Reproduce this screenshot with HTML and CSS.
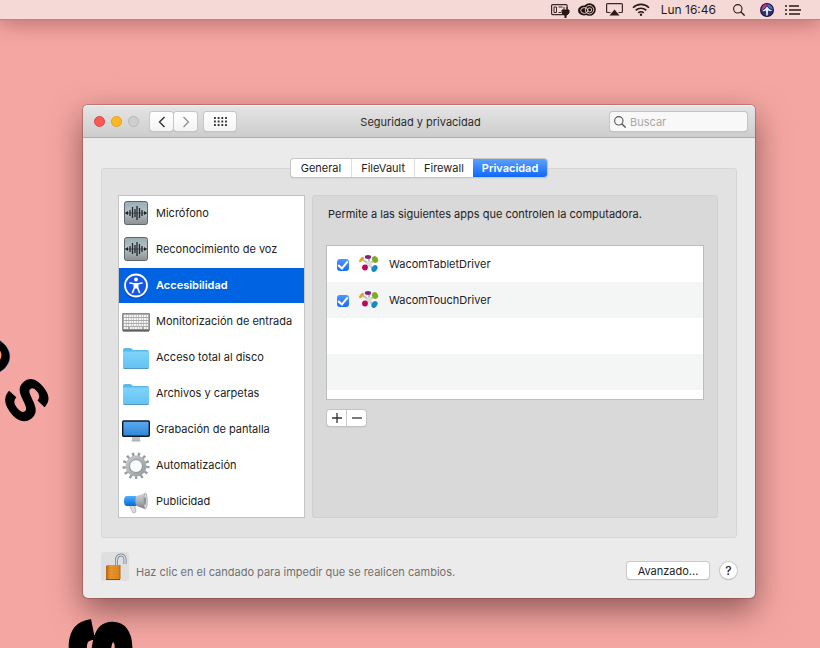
FILE: index.html
```
<!DOCTYPE html>
<html lang="es">
<head>
<meta charset="utf-8">
<title>Seguridad y privacidad</title>
<link rel="stylesheet" href="styles.css">
</head>
<body>
<svg class="defs" aria-hidden="true">
  <defs>
    <linearGradient id="steel" x1="0" y1="0" x2="0" y2="1"><stop offset="0" stop-color="#9aabb2"/><stop offset=".45" stop-color="#b4c2c8"/><stop offset="1" stop-color="#8e8f90"/></linearGradient>
    <linearGradient id="sky" x1="0" y1="0" x2="0" y2="1"><stop offset="0" stop-color="#7fd3fb"/><stop offset="1" stop-color="#64c2f2"/></linearGradient>
    <linearGradient id="screen" x1="0" y1="0" x2="0" y2="1"><stop offset="0" stop-color="#5aaaf0"/><stop offset="1" stop-color="#2f86d6"/></linearGradient>
    <linearGradient id="metal" x1="0" y1="0" x2="1" y2="1"><stop offset="0" stop-color="#c3c7ca"/><stop offset="1" stop-color="#9a9fa3"/></linearGradient>
    <linearGradient id="horn" x1="0" y1="0" x2="0" y2="1"><stop offset="0" stop-color="#d5d7d9"/><stop offset=".5" stop-color="#b0b4b7"/><stop offset="1" stop-color="#777c80"/></linearGradient>
    <linearGradient id="blue" x1="0" y1="0" x2="0" y2="1"><stop offset="0" stop-color="#4db2ff"/><stop offset="1" stop-color="#0668d8"/></linearGradient>
    <linearGradient id="brass" x1="0" y1="0" x2="1" y2="0"><stop offset="0" stop-color="#b5600f"/><stop offset=".3" stop-color="#e99a2f"/><stop offset=".85" stop-color="#e08a20"/><stop offset="1" stop-color="#b4620f"/></linearGradient>
  </defs>
  <symbol id="i-mic" viewBox="0 0 28 28">
    <rect x="2.500" y="2.500" width="23" height="23" rx="2" fill="url(#steel)" stroke="#5d666b"/>
    <path d="M3 14h22" stroke="#333" stroke-width=".7"/>
    <path d="M3 14l3-2v4zM25 14l-3-2v4z" fill="#222"/>
    <path d="M8 11v6M10.500 8v11M13 10v8M15 7v14M17.500 9v10M20 11v6" stroke="#22282b" stroke-width="1.300"/>
  </symbol>
  <symbol id="i-access" viewBox="0 0 28 28">
    <circle cx="14" cy="15.500" r="12" fill="#0643c0"/>
    <circle cx="14" cy="14.500" r="11" fill="#1456e8" stroke="#fff" stroke-width="1.800"/>
    <circle cx="14" cy="8.500" r="1.900" fill="#fff"/>
    <path d="M8 12l4.500 1v3.500l-2 5M20 12l-4.500 1v3.500l2 5" fill="none" stroke="#fff" stroke-width="1.600" stroke-linecap="round"/>
    <path d="M11.800 12h4.400v5.500h-4.400z" fill="#fff"/>
  </symbol>
  <symbol id="i-keys" viewBox="0 0 28 28">
    <rect x="0" y="6" width="28" height="18" rx="1" fill="#8b8b8b"/>
    <rect x="1" y="7" width="26" height="15" fill="#aaa"/>
    <path d="M2 9h24M2 12h24M2 15h24M2 18h24M2 21h4M8 21h12M22 21h4" stroke="#f7f7f7" stroke-width="1.800" stroke-dasharray="1.900 .6"/>
    <path d="M1 24h26" stroke="#333" stroke-width="1"/>
  </symbol>
  <symbol id="i-folder" viewBox="0 0 28 28">
    <path d="M1 7q0-2 2-2h5q1 0 2 1l1 1h14q2 0 2 2v14H1z" fill="#5bb9e8"/>
    <path d="M1 8.500h26V24q0 1.500-1.500 1.500h-23Q1 25.500 1 24z" fill="url(#sky)"/>
    <path d="M1.500 25.500h25" stroke="#5299bd"/>
  </symbol>
  <symbol id="i-screen" viewBox="0 0 28 28">
    <path d="M10 21h8v5h-8z" fill="#bfbfc2"/>
    <path d="M9.500 26h9" stroke="#aaa"/>
    <rect x=".7" y="6" width="26.600" height="15.300" rx="1" fill="url(#screen)" stroke="#111a24" stroke-width="1.400"/>
  </symbol>
  <symbol id="i-gear" viewBox="0 0 28 28">
    <circle cx="14" cy="15" r="11.700" fill="none" stroke="#989da1" stroke-width="3.800" stroke-dasharray="2.300 3.351"/>
    <circle cx="14" cy="15" r="8.500" fill="none" stroke="url(#metal)" stroke-width="4"/>
    <circle cx="14" cy="15" r="6.400" fill="none" stroke="#777c80" stroke-width=".8"/>
  </symbol>
  <symbol id="i-horn" viewBox="0 0 28 28">
    <path d="M7 18l4 8 3-1-1-6z" fill="#dadcde" stroke="#999ea2" stroke-width=".6"/>
    <path d="M12 10L23 6q3 8 0 16l-11-4z" fill="url(#horn)"/>
    <ellipse cx="23.500" cy="14" rx="1.800" ry="8" fill="#d5d8da" stroke="#92979b" stroke-width=".6"/>
    <ellipse cx="23" cy="14" rx="1" ry="4" fill="#8b9094"/>
    <path d="M14 9H5q-3 0-3 5t3 5h9q-1.500-5 0-10z" fill="url(#blue)"/>
  </symbol>
  <symbol id="i-wacom" viewBox="0 0 20 20">
    <path d="M10 10L3 5M10 10V3M10 10l6-4M10 10l-4 4M10 10l5 6" stroke="#bcbcbc" stroke-width="2"/>
    <circle cx="10" cy="10" r="3" fill="#ddd"/>
    <ellipse cx="2.500" cy="5.500" rx="1.500" ry="3.200" transform="rotate(40 2.500 5.500)" fill="#e6a416"/>
    <ellipse cx="9" cy="3" rx="3.200" ry="1.900" fill="#7d247e"/>
    <ellipse cx="16" cy="5.500" rx="2.900" ry="3.600" transform="rotate(-30 16 5.500)" fill="#7faa22"/>
    <circle cx="6" cy="13.500" r="2.900" fill="#be0756"/>
    <ellipse cx="15.500" cy="14.500" rx="2.700" ry="3.600" transform="rotate(35 15.500 14.500)" fill="#1688c4"/>
  </symbol>
  <symbol id="i-find" viewBox="0 0 12 12">
    <circle cx="4.800" cy="4.800" r="4.200" fill="none" stroke="currentColor" stroke-width="1.100"/>
    <path d="M7.800 7.800L11.600 11.600" stroke="currentColor" stroke-width="1.300"/>
  </symbol>
</svg>

<div class="wallpaper" aria-hidden="true">
  <span class="letter letter-o">O</span>
  <span class="letter letter-s">S</span>
  <span class="letter letter-big">S</span>
</div>

<header class="menubar">
  <svg class="m-battery" viewBox="0 0 19 16"><rect x=".6" y="2.600" width="15.500" height="10" rx="1" fill="none" stroke="#3b2826" stroke-width="1.200"/><path d="M3 5h2.500v5.500H3zM7.500 5h4M7.500 10.500H10" fill="none" stroke="#3b2826" stroke-width="1"/><path d="M13 5v3M16 5v3M11 8h7v3l-2 2h-1v3h-1v-3h-1l-2-2z" stroke="#2b1917" fill="#2b1917"/></svg>
  <svg class="m-cloud" viewBox="0 0 18 13"><ellipse cx="6" cy="7.500" rx="6" ry="5" fill="#211210"/><ellipse cx="11.500" cy="6.500" rx="6.300" ry="6.300" fill="#211210"/><g fill="none" stroke="#f5d9d7" stroke-width=".9"><ellipse cx="6.300" cy="7.500" rx="3.600" ry="2.900"/><circle cx="11.500" cy="6.700" r="4.200"/><circle cx="11.700" cy="6.900" r="2"/></g></svg>
  <svg class="m-airplay" viewBox="0 0 17 13"><path d="M4.500 9.500H1.600q-1 0-1-1V1.600q0-1 1-1h13.800q1 0 1 1v6.900q0 1-1 1h-2.900" fill="none" stroke="#3b2826" stroke-width="1.200"/><path d="M8.500 6.500L13.500 12.500h-10z" fill="#2b1917"/></svg>
  <svg class="m-wifi" viewBox="0 0 18 13"><path d="M1 4.700a11.300 11.300 0 0 1 16 0M3.700 7.400a7.500 7.500 0 0 1 10.600 0M6.300 9.900a3.900 3.900 0 0 1 5.400 0" fill="none" stroke="#2b1917" stroke-width="1.600"/><circle cx="9" cy="11.800" r="1.200" fill="#2b1917"/></svg>
  <time class="clock">Lun 16:46</time>
  <svg class="m-find"><use href="#i-find"/></svg>
  <svg class="m-siri" viewBox="0 0 14 14"><circle cx="7" cy="7" r="7" fill="#15102c"/><circle cx="7" cy="7" r="6" fill="#34306f"/><path d="M1.300 7Q2 1.500 7 1q-1 4-5.700 6z" fill="#d6338c"/><path d="M7 1q5 .5 5.800 5.500Q8 5 7 1z" fill="#496fc9"/><path d="M2 8q3-1 5-4.500Q9 7 12.500 8 9 8 8 7.500L7.700 12.500H6.300L6 7.500Q4 8.500 2 8z" fill="#e7f6fb"/></svg>
  <svg class="m-list" viewBox="0 0 16 10"><path d="M0 1h2M0 5h2M0 9h2M4 1h10M4 5h12M4 9h11" stroke="#2b1917" stroke-width="1.700"/></svg>
</header>

<main class="window">
  <div class="titlebar">
    <div class="titlebar-left">
      <i class="light red"></i><i class="light yellow"></i><i class="light off"></i>
      <div class="nav">
        <button type="button" aria-label="Atrás"><svg viewBox="0 0 8 12"><path d="M6.500 1L1.500 6l5 5" fill="none" stroke="#333" stroke-width="1.400"/></svg></button>
        <button type="button" aria-label="Adelante"><svg viewBox="0 0 8 12"><path d="M1.500 1l5 5-5 5" fill="none" stroke="#8c8c8c" stroke-width="1.200"/></svg></button>
      </div>
      <button type="button" class="show-all" aria-label="Mostrar todo"><svg viewBox="0 0 13 9"><path d="M0 1h14M0 4.500h14M0 8h14" stroke="#333" stroke-width="1.800" stroke-dasharray="1.800 1.900"/></svg></button>
    </div>
    <h1>Seguridad y privacidad</h1>
    <label class="search"><svg><use href="#i-find"/></svg><input type="text" placeholder="Buscar" aria-label="Buscar"></label>
  </div>

  <div class="content">
    <nav class="tabs">
      <button type="button">General</button>
      <button type="button">FileVault</button>
      <button type="button">Firewall</button>
      <button type="button" class="active">Privacidad</button>
    </nav>

    <section class="panel">
      <ul class="services">
        <li><svg><use href="#i-mic"/></svg>Micrófono</li>
        <li><svg><use href="#i-mic"/></svg>Reconocimiento de voz</li>
        <li class="selected"><svg><use href="#i-access"/></svg>Accesibilidad</li>
        <li><svg><use href="#i-keys"/></svg>Monitorización de entrada</li>
        <li><svg><use href="#i-folder"/></svg>Acceso total al disco</li>
        <li><svg><use href="#i-folder"/></svg>Archivos y carpetas</li>
        <li><svg><use href="#i-screen"/></svg>Grabación de pantalla</li>
        <li><svg><use href="#i-gear"/></svg>Automatización</li>
        <li><svg><use href="#i-horn"/></svg>Publicidad</li>
      </ul>

      <div class="detail">
        <p>Permite a las siguientes apps que controlen la computadora.</p>
        <div class="apps">
          <label><input type="checkbox" checked><svg><use href="#i-wacom"/></svg>WacomTabletDriver</label>
          <label><input type="checkbox" checked><svg><use href="#i-wacom"/></svg>WacomTouchDriver</label>
        </div>
        <div class="add-remove">
          <button type="button" aria-label="Agregar"><svg viewBox="0 0 10 10"><path d="M0 5h10M5 0v10" stroke="#333" stroke-width="1.300"/></svg></button>
          <button type="button" aria-label="Eliminar"><svg viewBox="0 0 10 10"><path d="M0 5h10" stroke="#333" stroke-width="1.300"/></svg></button>
        </div>
      </div>
    </section>

    <footer>
      <button type="button" class="lock" aria-label="Candado"><svg viewBox="0 0 28 29">
        <path d="M15.500 14V9q0-6 4.500-6t4 6v3" fill="none" stroke="#6e7c88" stroke-width="3"/>
        <path d="M15.500 14V9q0-6 4.500-6t4 6v3" fill="none" stroke="#d2dde4" stroke-width="1.500"/>
        <path d="M5 14l2-1h12.500v14L6 28l-1-1z" fill="url(#brass)"/>
        <path d="M8 16h10M8 19h10M8 22h10M8 25h10" stroke="#d28224" stroke-width=".6"/>
        <path d="M5 27.500h14" stroke="#8d4a08"/>
      </svg></button>
      <p>Haz clic en el candado para impedir que se realicen cambios.</p>
      <button type="button" class="advanced">Avanzado...</button>
      <button type="button" class="help" aria-label="Ayuda">?</button>
    </footer>
  </div>
</main>
</body>
</html>
```
FILE: styles.css
```
* { box-sizing: border-box; }
body { margin: 0; min-height: 100vh; background: #f4a6a2; color: #222; font: 11px/16px Inter, "Liberation Sans", sans-serif; }
button { margin: 0; padding: 0; border: 0; background: #fff; color: #222; font: inherit; }
svg { display: block; flex: none; }
p, h1, ul { margin: 0; padding: 0; }
.defs { position: absolute; width: 0; height: 0; }

/* poster lettering behind the window */
.wallpaper { position: absolute; inset: 0; overflow: hidden; }
.letter { position: absolute; color: #000; font-family: "Liberation Sans", sans-serif; font-weight: bold; line-height: 1; -webkit-text-stroke: 2px #000; }
.letter-s { left: 8px; top: 372px; font-size: 56px; transform: rotate(52deg); }
.letter-o { left: -28px; top: 333px; font-size: 48px; transform: rotate(50deg); }
.letter-big { left: 75px; top: 610px; font-size: 76px; transform: rotate(88deg); -webkit-text-stroke: 10px #000; }

.menubar { position: relative; display: flex; align-items: center; justify-content: flex-end; height: 19px; padding-right: 19px; background: #f5d9d7; color: #2b1917; box-shadow: 0 1px 0 #b98581, 0 2px 22px rgba(90, 30, 30, .5); }
.m-battery { width: 19px; height: 16px; margin-right: 8px; }
.m-cloud { width: 18px; height: 13px; margin-right: 10px; }
.m-airplay { width: 17px; height: 13px; margin-right: 9px; }
.m-wifi { width: 18px; height: 13px; margin-right: 11px; }
.clock { margin-right: 17px; font-size: 12px; }
.m-find { width: 12px; height: 12px; margin-right: 15px; }
.m-siri { width: 14px; height: 14px; margin-right: 11px; }
.m-list { width: 16px; height: 10px; }

.window { position: relative; margin: 86px 65px 50px 83px; border-radius: 5px; background: #ebebeb; box-shadow: 0 0 0 1px rgba(110, 40, 40, .3), 0 12px 32px rgba(40, 10, 10, .5); }
.titlebar { display: grid; grid-template-columns: 1fr auto 1fr; align-items: center; height: 33px; padding: 0 8px 0 11px; border-top: 1px solid #f5f5f5; border-bottom: 1px solid #adadad; border-radius: 5px 5px 0 0; background: linear-gradient(#e4e4e4, #cdcdcd); }
.titlebar h1 { font-size: 11px; font-weight: 400; color: #2b2b2b; }
.titlebar-left { display: flex; align-items: center; }
.light { width: 11px; height: 11px; margin-right: 6px; border: 1px solid; border-radius: 50%; }
.red { background: #fc5753; border-color: #df4744; }
.yellow { background: #fdb924; border-color: #dfa023; }
.off { background: #cfcfcf; border-color: #b6b6b6; }
.nav { display: flex; gap: 1px; margin: 0 7px 0 5px; }
.nav button, .show-all { display: grid; place-items: center; width: 23px; height: 19px; border-radius: 3px; background: linear-gradient(#fff, #f4f4f4); box-shadow: 0 0 0 1px #c6c6c6, 0 1px 1px #999; }
.nav svg { width: 8px; height: 12px; }
.titlebar .show-all { width: 32px; }
.show-all svg { width: 13px; height: 9px; }
.search { display: flex; align-items: center; justify-self: end; width: 137px; height: 19px; padding-left: 4px; border-radius: 3px; background: #f8f8f8; box-shadow: 0 0 0 1px #c4c4c4, 0 1px 1px #999; color: #555; }
.search svg { width: 12px; height: 12px; }
.search input { min-width: 0; width: 100%; padding: 0 4px; border: 0; background: none; font: inherit; outline: 0; }
.search input::placeholder { color: #a8a8a8; }

.content { padding: 21px 18px 17px; }
.tabs { position: relative; display: flex; width: max-content; margin: 0 auto -9px; border-radius: 3px; background: #fff; box-shadow: 0 0 0 1px #c6c6c6, 0 1px 1px #999; }
.tabs button { height: 18px; padding: 0 9px; border-left: 1px solid #ddd; background: none; }
.tabs button:first-child { padding: 0 10px; border: 0; }
.tabs .active { border: 0; border-radius: 0 3px 3px 0; background: linear-gradient(#5da0fc, #0f68fa); color: #fff; font-weight: 600; }

.panel { display: flex; gap: 7px; height: 370px; padding: 26px 18px 19px 16px; border: 1px solid #d6d6d6; border-radius: 3px; background: #e2e2e2; }
.services { flex: none; width: 187px; overflow: hidden; border: 1px solid #c3c3c3; background: #fff; list-style: none; }
.services li { display: flex; align-items: center; height: 36px; padding: 0 3px 2px; gap: 6px; }
.services svg { width: 28px; height: 28px; }
.services .selected { height: 35px; margin-bottom: 1px; background: #0063e1; color: #fff; font-weight: 600; }
.detail { flex: 1; padding: 10px 13px 0; border: 1px solid #d0d0d0; border-radius: 3px; background: #d9d9d9; }
.detail p { padding-left: 2px; }
.apps { height: 155px; margin: 23px 0 10px; border: 1px solid #bdbdbd; background: repeating-linear-gradient(#fff 0 36px, #f4f5f5 36px 72px) #fff; }
.apps label { display: flex; align-items: center; height: 36px; padding-left: 10px; }
.apps input { appearance: none; display: grid; place-items: center; width: 12px; height: 12px; margin: 2px 10px 0 0; border-radius: 3px; background: linear-gradient(#4d97fb, #1a6dfa); }
.apps input::after { content: ""; width: 4px; height: 8px; margin-top: -2px; border: solid #fff; border-width: 0 2px 2px 0; transform: rotate(40deg); }
.apps svg { width: 20px; height: 20px; margin-right: 10px; }
.add-remove { display: flex; width: max-content; margin-left: 1px; border-radius: 3px; background: #fff; box-shadow: 0 0 0 1px #c3c3c3, 0 1px 1px #888; }
.add-remove button { display: grid; place-items: center; width: 19px; height: 16px; background: none; }
.add-remove button + button { width: 20px; border-left: 1px solid #ccc; }
.add-remove svg { width: 10px; height: 10px; }

footer { display: flex; align-items: center; padding-top: 14px; }
footer p { flex: 1; padding: 10px 0 0 7px; color: #707070; }
.lock { width: 28px; height: 29px; border-radius: 3px; background: #dfdfdf; }
.lock svg { width: 28px; height: 29px; }
.advanced, .help { margin-top: 8px; box-shadow: 0 0 0 1px #c9c9c9, 0 1px 1px #999; }
.advanced { width: 82px; height: 17px; border-radius: 3px; }
.help { width: 17px; height: 17px; margin-left: 11px; border-radius: 50%; font-size: 12px; font-weight: 500; }
```
